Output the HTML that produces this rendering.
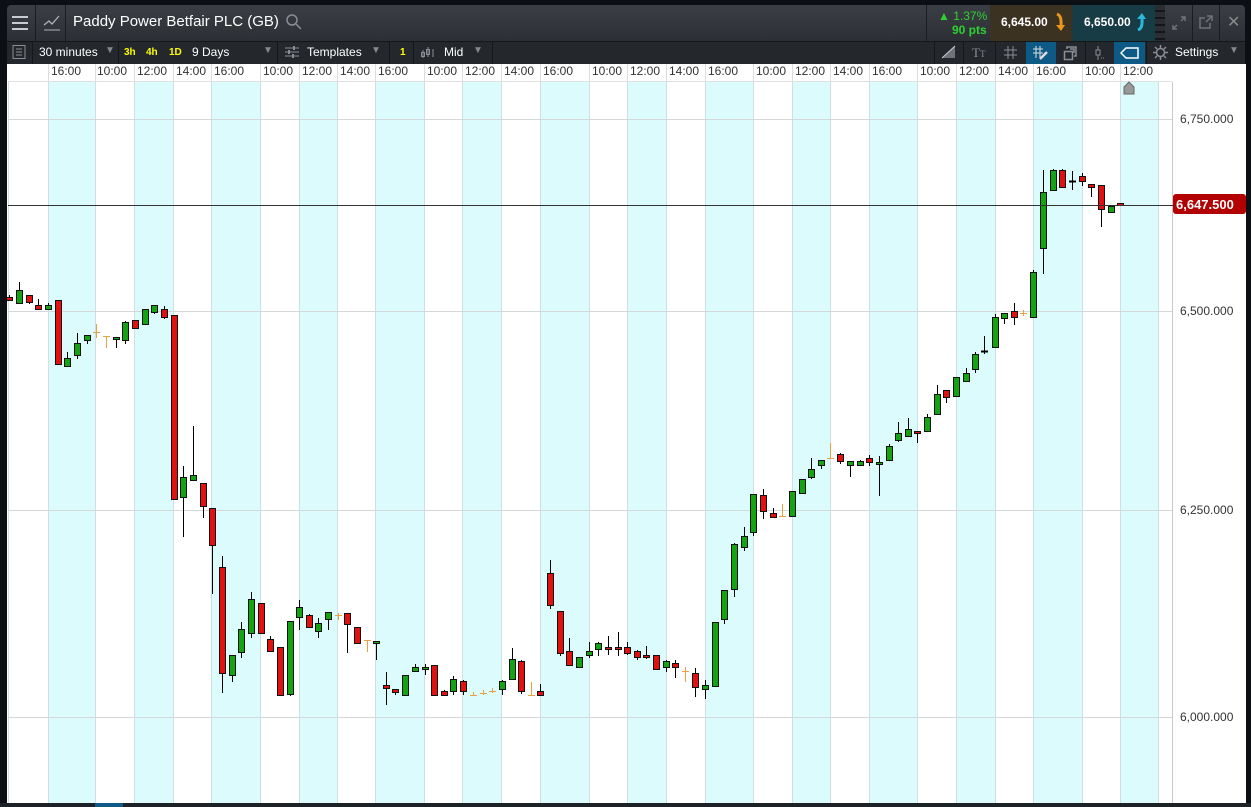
<!DOCTYPE html>
<html><head><meta charset="utf-8"><style>
*{margin:0;padding:0;box-sizing:border-box}
body{width:1251px;height:807px;background:#0c0f13;position:relative;overflow:hidden;font-family:"Liberation Sans",sans-serif}
.a{position:absolute}
.top{left:7px;top:5px;width:1238px;height:36px;background:linear-gradient(#3b3f45,#2c3035);border-radius:4px 4px 0 0}
.tb{left:7px;top:41px;width:1238px;height:23px;background:#24282d;border-top:1px solid #15181b}
.t{color:#fff;font-size:12px;white-space:nowrap}
.sep{width:1px;background:#15181b}
.y{color:#ff0;font-size:10px;font-weight:bold}
</style></head><body>
<div class="a top"></div>
<div class="a" style="left:35px;top:5px;width:1px;height:36px;background:#1a1d20"></div>
<div class="a" style="left:65px;top:5px;width:1px;height:36px;background:#1a1d20"></div>
<svg class="a" style="left:11px;top:13px" width="20" height="20"><path d="M1 4h16M1 10h16M1 16h16" stroke="#c8cbd0" stroke-width="2"/></svg>
<svg class="a" style="left:42px;top:11px" width="20" height="22"><path d="M2 14l5-4 3 3 7-8" stroke="#aeb2b7" fill="none" stroke-width="1.3"/><path d="M2 19h16" stroke="#aeb2b7"/></svg>
<div class="a t" style="left:73px;top:13px;font-size:15px">Paddy Power Betfair PLC (GB)</div>
<svg class="a" style="left:285px;top:13px" width="18" height="18"><circle cx="7" cy="7" r="5" stroke="#8a8e94" fill="none" stroke-width="1.5"/><path d="M11 11l5 5" stroke="#8a8e94" stroke-width="1.5"/></svg>
<div class="a" style="left:926px;top:5px;width:1px;height:36px;background:#1a1d20"></div>
<div class="a" style="left:938px;top:9px;color:#2fd02f;font-size:12px">▲ 1.37%</div>
<div class="a" style="left:952px;top:23px;color:#2fd02f;font-size:12px;font-weight:bold">90 pts</div>
<div class="a" style="left:990px;top:5px;width:82px;height:36px;background:#3c3222"></div>
<div class="a t" style="left:1001px;top:15px;font-weight:bold">6,645.00</div>
<svg class="a" style="left:1054px;top:12px" width="12" height="20"><path d="M3 2c5 2 4 8 4 13" stroke="#e8961c" stroke-width="3" fill="none"/><path d="M2 13l5 6 4-6z" fill="#e8961c"/></svg>
<div class="a" style="left:1072px;top:5px;width:83px;height:36px;background:#173c46"></div>
<div class="a t" style="left:1084px;top:15px;font-weight:bold">6,650.00</div>
<svg class="a" style="left:1135px;top:11px" width="12" height="20"><path d="M3 19c5-2 4-8 4-13" stroke="#2cb8d8" stroke-width="3" fill="none"/><path d="M2 8l5-6 4 6z" fill="#2cb8d8"/></svg>
<div class="a" style="left:1155px;top:5px;width:10px;height:36px;background:repeating-linear-gradient(#2a2e33 0 5px,#14171a 5px 7px)"></div>
<div class="a" style="left:1192px;top:5px;width:1px;height:36px;background:#1a1d20"></div>
<div class="a" style="left:1219px;top:5px;width:1px;height:36px;background:#1a1d20"></div>
<svg class="a" style="left:1171px;top:15px" width="16" height="16"><path d="M2 14l4-4M14 2l-4 4M2 10v4h4M14 6V2h-4" stroke="#6f7379" fill="none" stroke-width="1.5"/></svg>
<svg class="a" style="left:1198px;top:14px" width="16" height="16"><path d="M9 2h5v5M14 2l-6 6M12 9v5H2V4h5" stroke="#6f7379" fill="none" stroke-width="1.5"/></svg>
<div class="a" style="left:1227px;top:12px;color:#888;font-size:16px">✕</div>

<div class="a tb"></div>
<svg class="a" style="left:11px;top:44px" width="16" height="16"><rect x="2" y="1.5" width="12" height="13" stroke="#8a8e94" fill="none"/><path d="M5 5h6M5 8h6M5 11h6" stroke="#8a8e94"/></svg>
<div class="a sep" style="left:32px;top:42px;height:22px"></div>
<div class="a t" style="left:39px;top:45px">30 minutes</div>
<div class="a" style="left:105px;top:45px;color:#888;font-size:10px">▼</div>
<div class="a sep" style="left:118px;top:42px;height:22px"></div>
<div class="a y" style="left:124px;top:47px">3h</div>
<div class="a y" style="left:146px;top:47px">4h</div>
<div class="a y" style="left:169px;top:47px">1D</div>
<div class="a t" style="left:192px;top:45px">9 Days</div>
<div class="a" style="left:263px;top:45px;color:#888;font-size:10px">▼</div>
<div class="a sep" style="left:277px;top:42px;height:22px"></div>
<svg class="a" style="left:284px;top:45px" width="16" height="14"><path d="M1 3h14M1 7h14M1 11h14" stroke="#8a8e94"/><path d="M10 1v4M5 5v4M9 9v4" stroke="#8a8e94" stroke-width="2"/></svg>
<div class="a t" style="left:307px;top:45px">Templates</div>
<div class="a" style="left:371px;top:45px;color:#888;font-size:10px">▼</div>
<div class="a sep" style="left:389px;top:42px;height:22px"></div>
<div class="a y" style="left:400px;top:47px">1</div>
<div class="a sep" style="left:413px;top:42px;height:22px"></div>
<svg class="a" style="left:420px;top:45px" width="16" height="14"><path d="M3 5v8M8 2v10M13 4v8" stroke="#8a8e94"/><rect x="1.5" y="7.5" width="3" height="4" fill="none" stroke="#8a8e94"/><rect x="6.5" y="4.5" width="3" height="5" fill="none" stroke="#8a8e94"/></svg>
<div class="a t" style="left:444px;top:45px">Mid</div>
<div class="a" style="left:473px;top:45px;color:#888;font-size:10px">▼</div>
<div class="a sep" style="left:492px;top:42px;height:22px"></div>
<div class="a sep" style="left:934px;top:42px;height:22px"></div>
<svg class="a" style="left:940px;top:44px" width="18" height="16"><path d="M2 14L15 2v12z" fill="#6f7379"/><path d="M2 14L15 2" stroke="#ccc"/></svg>
<div class="a sep" style="left:963px;top:42px;height:22px"></div>
<div class="a" style="left:972px;top:45px;color:#8a8e94;font-size:13px;font-family:'Liberation Serif',serif">T<span style="font-size:9px">T</span></div>
<div class="a sep" style="left:995px;top:42px;height:22px"></div>
<svg class="a" style="left:1003px;top:45px" width="15" height="15"><path d="M5 1v13M10 1v13M1 5h13M1 10h13" stroke="#8a8e94"/></svg>
<div class="a" style="left:1026px;top:42px;width:30px;height:22px;background:#0e5a86"></div>
<svg class="a" style="left:1032px;top:45px" width="18" height="16"><path d="M4 1v12M8 1v12M1 4h10M1 8h10" stroke="#ddd"/><path d="M8 14l7-7" stroke="#ddd" stroke-width="2.5"/></svg>
<svg class="a" style="left:1063px;top:45px" width="16" height="16"><rect x="1.5" y="6.5" width="8" height="8" fill="none" stroke="#8a8e94" stroke-width="1.5"/><path d="M4 4V2h9v9h-2M7 4h4v4" stroke="#8a8e94" fill="none" stroke-width="1.5"/></svg>
<div class="a sep" style="left:1085px;top:42px;height:22px"></div>
<svg class="a" style="left:1093px;top:45px" width="14" height="16"><path d="M5 1v14" stroke="#8a8e94"/><rect x="3" y="5" width="4" height="5" fill="#24282d" stroke="#8a8e94"/><path d="M8 13h4" stroke="#8a8e94" stroke-dasharray="1 1"/></svg>
<div class="a" style="left:1114px;top:42px;width:31px;height:22px;background:#0e5a86"></div>
<svg class="a" style="left:1120px;top:46px" width="20" height="14"><path d="M6 2h12v10H6L1 7z" fill="none" stroke="#fff" stroke-width="1.5"/></svg>
<div class="a sep" style="left:1146px;top:42px;height:22px"></div>
<svg class="a" style="left:1152px;top:44px" width="17" height="17"><circle cx="8.5" cy="8.5" r="4" fill="none" stroke="#8a8e94" stroke-width="1.5"/><path d="M8.5 1v3M8.5 13v3M1 8.5h3M13 8.5h3M3 3l2 2M12 12l2 2M3 14l2-2M12 5l2-2" stroke="#8a8e94" stroke-width="1.5"/></svg>
<div class="a t" style="left:1175px;top:45px">Settings</div>
<div class="a" style="left:1229px;top:45px;color:#888;font-size:10px">▼</div>

<svg class="a" style="left:0;top:64px" width="1251" height="743" viewBox="0 64 1251 743" id="ch"></svg>
<div class="a" style="left:0;top:803px;width:1251px;height:4px;background:#1d2226"></div>
<div class="a" style="left:95px;top:803px;width:28px;height:4px;background:#0e5a86"></div>

<div class="a" style="left:0;top:64px;font-size:12px;color:#333">
<span class="a" style="left:51px">16:00</span><span class="a" style="left:97px">10:00</span><span class="a" style="left:137px">12:00</span><span class="a" style="left:176px">14:00</span><span class="a" style="left:214px">16:00</span><span class="a" style="left:263px">10:00</span><span class="a" style="left:302px">12:00</span><span class="a" style="left:340px">14:00</span><span class="a" style="left:378px">16:00</span><span class="a" style="left:427px">10:00</span><span class="a" style="left:465px">12:00</span><span class="a" style="left:504px">14:00</span><span class="a" style="left:543px">16:00</span><span class="a" style="left:592px">10:00</span><span class="a" style="left:630px">12:00</span><span class="a" style="left:669px">14:00</span><span class="a" style="left:708px">16:00</span><span class="a" style="left:756px">10:00</span><span class="a" style="left:795px">12:00</span><span class="a" style="left:833px">14:00</span><span class="a" style="left:872px">16:00</span><span class="a" style="left:920px">10:00</span><span class="a" style="left:959px">12:00</span><span class="a" style="left:998px">14:00</span><span class="a" style="left:1036px">16:00</span><span class="a" style="left:1085px">10:00</span><span class="a" style="left:1123px">12:00</span>
</div>
<div class="a" style="left:1180px;top:112px;font-size:12px;color:#333">6,750.000</div>
<div class="a" style="left:1180px;top:304px;font-size:12px;color:#333">6,500.000</div>
<div class="a" style="left:1180px;top:503px;font-size:12px;color:#333">6,250.000</div>
<div class="a" style="left:1180px;top:710px;font-size:12px;color:#333">6,000.000</div>
<div class="a" style="left:1173px;top:194px;width:73px;height:20px;background:#b30000;border-radius:3px;color:#fff;font-size:13px;font-weight:bold;padding:3px 0 0 3px">6,647.500</div>

<script>
var s=document.getElementById('ch'),h='';
h+='<rect x="7" y="64" width="1239" height="739" fill="#fff"/>';
var B=[8,48,95,134,173,211,260,299,337,375,424,462,501,540,589,627,666,705,753,792,830,869,917,956,995,1033,1082,1120,1158];
for(var i=1;i<B.length-1;i+=2)h+='<rect x="'+B[i]+'" y="82" width="'+(B[i+1]-B[i])+'" height="721" fill="#dcfbfc"/>';
for(var i=0;i<B.length;i++){h+='<line x1="'+(B[i]+.5)+'" y1="82" x2="'+(B[i]+.5)+'" y2="803" stroke="#cfdfe2"/>';if(i>0&&i<B.length-1)h+='<line x1="'+(B[i]+.5)+'" y1="64" x2="'+(B[i]+.5)+'" y2="81" stroke="#ddd"/>';}
[119,311,510,717].forEach(function(y){h+='<line x1="8" y1="'+(y+.5)+'" x2="1172" y2="'+(y+.5)+'" stroke="#d4d8da"/>';});
h+='<line x1="8" y1="81.5" x2="1172" y2="81.5" stroke="#e0e0e0"/>';
h+='<line x1="1172.5" y1="82" x2="1172.5" y2="803" stroke="#c8c8c8"/>';
h+='<path d="M1124 94v-7l5-5 5 5v7z" fill="#999" stroke="#666"/>';
var C=[[9,295,300,297,300,'r'],[19,282,304,290,303,'g'],[29,295,304,295,302,'r'],[38,299,309,305,309,'r'],[48,303,309,305,309,'g'],[58,300,364,300,364,'r'],[67,352,366,358,366,'g'],[77,333,359,343,355,'g'],[87,335,344,335,340,'g'],[96,324,338,332,332,'o'],[106,336,348,336,336,'o'],[116,337,348,337,339,'g'],[125,321,344,322,340,'g'],[135,320,328,320,328,'r'],[145,309,324,309,324,'g'],[154,305,314,305,312,'g'],[164,306,319,309,317,'r'],[174,315,499,315,499,'r'],[183,466,537,477,497,'g'],[193,426,480,475,480,'g'],[203,483,518,483,506,'r'],[212,508,594,508,545,'r'],[222,556,693,567,673,'r'],[232,655,682,655,675,'g'],[241,622,658,629,652,'g'],[251,592,638,599,633,'g'],[261,603,633,603,633,'r'],[270,636,651,639,651,'r'],[280,647,695,647,695,'r'],[290,621,696,621,694,'g'],[299,600,630,607,617,'g'],[309,614,627,615,627,'r'],[318,618,638,623,631,'g'],[328,612,630,612,619,'g'],[338,613,620,615,615,'o'],[347,613,653,613,624,'r'],[357,627,643,627,643,'r'],[367,640,652,640,640,'o'],[376,641,660,641,643,'g'],
[386,672,705,685,688,'r'],[395,689,695,689,692,'r'],[405,675,695,675,695,'g'],[415,664,671,667,671,'g'],[425,664,675,667,669,'g'],[434,665,695,665,695,'r'],[444,690,695,691,695,'r'],[453,676,695,679,691,'g'],[463,680,695,681,691,'r'],[473,692,695,695,695,'o'],[483,690,695,693,693,'o'],[492,688,693,691,691,'o'],[502,680,695,681,689,'g'],[512,648,679,659,679,'g'],[521,660,694,661,691,'r'],[531,682,695,695,695,'o'],[540,684,695,691,695,'r'],[550,560,609,573,605,'r'],[560,611,656,611,653,'r'],[569,638,666,651,665,'r'],[579,657,667,657,667,'g'],[589,642,658,651,655,'g'],[598,642,656,643,649,'g'],[608,636,655,647,649,'r'],[618,632,656,647,649,'r'],[627,642,655,647,653,'r'],[637,650,660,651,657,'r'],[646,646,659,655,657,'r'],[656,655,669,655,669,'r'],[666,660,672,661,667,'g'],[675,660,678,663,667,'r'],[685,667,682,671,671,'o'],[695,668,697,673,687,'r'],[705,680,699,685,689,'g'],
[715,622,686,622,686,'g'],[724,590,624,590,619,'g'],[734,543,597,544,589,'g'],[744,527,551,536,547,'g'],[753,494,536,494,532,'g'],[763,489,519,495,511,'r'],[773,508,518,513,517,'r'],[782,504,516,516,516,'o'],[792,491,517,491,516,'g'],[802,479,493,479,493,'g'],[811,458,479,469,477,'g'],[821,460,469,460,465,'g'],[830,443,458,458,458,'o'],[840,453,464,454,461,'r'],[850,461,477,461,465,'g'],[860,460,466,461,465,'g'],[869,455,466,458,462,'r'],[879,456,496,462,464,'g'],[889,444,460,446,460,'g'],[898,422,442,433,440,'g'],[908,418,436,429,436,'g'],[917,431,443,431,433,'r'],[927,414,432,417,431,'g'],[937,385,414,394,414,'g'],[946,390,403,390,397,'r'],[956,377,396,377,396,'g'],[966,368,381,373,381,'g'],[975,352,373,354,369,'g'],[984,336,354,351,351,'k'],[995,314,347,317,347,'g'],[1004,313,324,313,318,'g'],[1014,303,325,311,317,'r'],[1023,310,316,313,313,'o'],[1033,270,317,272,317,'g'],[1043,170,274,192,248,'g'],[1053,169,190,170,190,'g'],[1062,169,188,170,187,'r'],[1072,171,190,181,181,'k'],[1082,173,186,176,181,'r'],[1091,184,197,184,187,'r'],[1101,185,227,185,209,'r'],[1111,206,213,206,212,'g'],[1120,203,205,203,205,'r']];
C.forEach(function(c){var x=c[0],col=c[5];
if(col=='o'||col=='k'){var st=col=='o'?'#e8a040':'#000';h+='<line x1="'+(x+.5)+'" y1="'+c[1]+'" x2="'+(x+.5)+'" y2="'+c[2]+'" stroke="'+st+'"/><line x1="'+(x-3)+'" y1="'+(c[3]+.5)+'" x2="'+(x+4)+'" y2="'+(c[3]+.5)+'" stroke="'+st+'" stroke-width="'+(col=='k'?2:1)+'"/>';return;}
h+='<line x1="'+(x+.5)+'" y1="'+c[1]+'" x2="'+(x+.5)+'" y2="'+c[2]+'" stroke="#000"/>';
var ht=Math.max(c[4]-c[3],2);
h+='<rect x="'+(x-2.5)+'" y="'+(c[3]+.5)+'" width="6" height="'+ht+'" fill="'+(col=='g'?'#13a313':'#e31010')+'" stroke="#111"/>';});
h+='<line x1="8" y1="205.5" x2="1246" y2="205.5" stroke="#333"/>';
h+='<rect x="1246" y="64" width="5" height="743" fill="#0c0f13"/><rect x="0" y="64" width="7" height="743" fill="#0c0f13"/>';
s.innerHTML=h;
</script>
</body></html>
